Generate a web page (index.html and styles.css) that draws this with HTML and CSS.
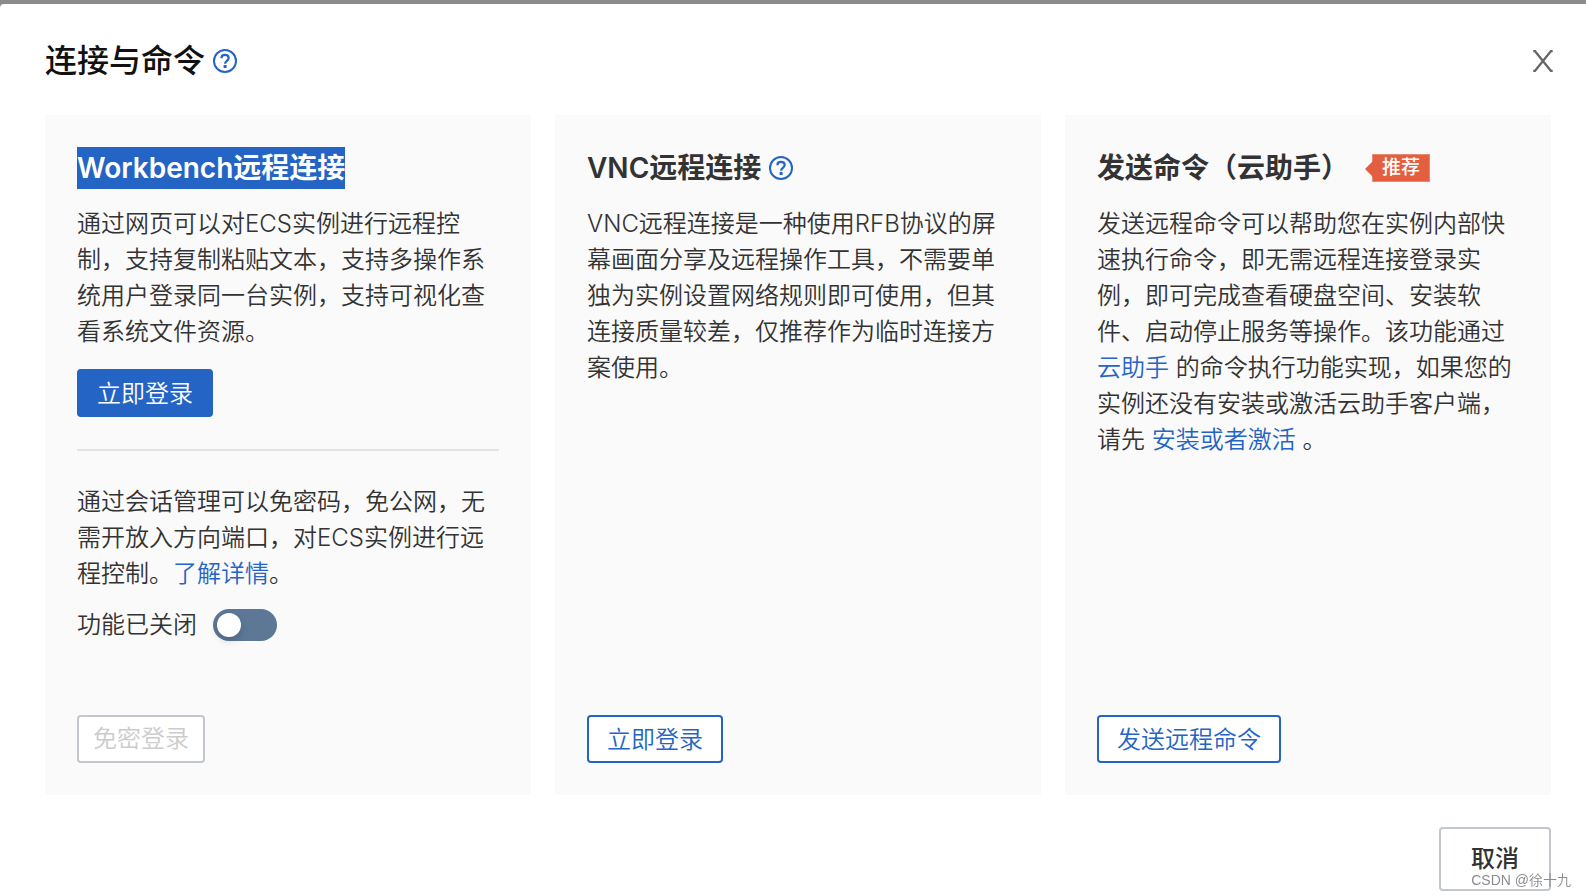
FILE: index.html
```
<!DOCTYPE html>
<html lang="zh-CN">
<head>
    <meta charset="UTF-8">
    <title>连接与命令</title>
    <link rel="stylesheet" href="styles.css">
</head>
<body>
    <div class="dialog" role="dialog" aria-labelledby="dialogTitle">
        <div class="dialog-header">
            <h1 id="dialogTitle">连接与命令</h1>
            <button type="button" class="icon-btn" aria-label="帮助">
                <svg width="24" height="24" viewBox="0 0 24 24" fill="none" stroke="currentColor">
                    <circle cx="12" cy="12" r="11" stroke-width="2"/>
                    <path d="M8.4 9.2C8.4 7 9.9 5.9 12 5.9s3.7 1.2 3.7 3.2c0 2.7-3.6 2.7-3.6 5.6" stroke-width="2.2"/>
                    <path d="M12.1 16v3" stroke-width="3"/>
                </svg>
            </button>
            <button type="button" class="icon-btn close-btn" aria-label="关闭">
                <svg width="20" height="22" viewBox="0 0 20 22" fill="none" stroke="currentColor" stroke-width="2.3">
                    <path d="M.3 1h1.6L18 21h1.7M19.7 1H18L1.9 21H.3"/>
                </svg>
            </button>
        </div>

        <div class="cards">
            <section class="card">
                <h2><span class="selected">Workbench远程连接</span></h2>
                <p>通过网页可以对ECS实例进行远程控制，支持复制粘贴文本，支持多操作系统用户登录同一台实例，支持可视化查看系统文件资源。</p>
                <button type="button" class="btn btn-primary">立即登录</button>
                <hr>
                <p>通过会话管理可以免密码，免公网，无需开放入方向端口，对ECS实例进行远程控制。<a href="#">了解详情</a>。</p>
                <div class="switch-row">
                    <label for="sessionSwitch">功能已关闭</label>
                    <input type="checkbox" role="switch" id="sessionSwitch" class="switch">
                </div>
                <div class="card-footer">
                    <button type="button" class="btn btn-disabled" disabled>免密登录</button>
                </div>
            </section>

            <section class="card">
                <h2>
                    VNC远程连接
                    <button type="button" class="icon-btn" aria-label="帮助">
                        <svg width="24" height="24" viewBox="0 0 24 24" fill="none" stroke="currentColor">
                            <circle cx="12" cy="12" r="11" stroke-width="2"/>
                            <path d="M8.4 9.2C8.4 7 9.9 5.9 12 5.9s3.7 1.2 3.7 3.2c0 2.7-3.6 2.7-3.6 5.6" stroke-width="2.2"/>
                            <path d="M12.1 16v3" stroke-width="3"/>
                        </svg>
                    </button>
                </h2>
                <p>VNC远程连接是一种使用RFB协议的屏幕画面分享及远程操作工具，不需要单独为实例设置网络规则即可使用，但其连接质量较差，仅推荐作为临时连接方案使用。</p>
                <div class="card-footer">
                    <button type="button" class="btn btn-outline">立即登录</button>
                </div>
            </section>

            <section class="card">
                <h2>发送命令（云助手）<span class="tag">推荐</span></h2>
                <p>发送远程命令可以帮助您在实例内部快速执行命令，即无需远程连接登录实例，即可完成查看硬盘空间、安装软件、启动停止服务等操作。该功能通过 <a href="#">云助手</a> 的命令执行功能实现，如果您的实例还没有安装或激活云助手客户端，请先 <a href="#">安装或者激活</a> 。</p>
                <div class="card-footer">
                    <button type="button" class="btn btn-outline">发送远程命令</button>
                </div>
            </section>
        </div>

        <div class="dialog-footer">
            <button type="button" class="btn btn-cancel">取消</button>
        </div>
    </div>
    <div class="watermark">CSDN @徐十九</div>
</body>
</html>
```
FILE: styles.css
```
* {
    box-sizing: border-box;
}

body {
    margin: 0;
    padding-top: 4px;
    background-color: #8b8b8b;
    color: #333;
    font-family: Inter, "Noto Sans CJK SC", sans-serif;
    font-size: 24px;
    font-weight: 350;
    line-height: 36px;
}

.dialog {
    display: flex;
    flex-direction: column;
    min-height: calc(100vh - 4px);
    padding: 0 35px 5px 45px;
    border-radius: 4px 0 0 0;
    background-color: #fff;
}

.dialog-header {
    display: flex;
    align-items: center;
    gap: 8px;
    padding: 33px 0 30px;
}

h1, h2, p {
    margin: 0;
}

h1 {
    color: #111;
    font-size: 32px;
    font-weight: 500;
    line-height: 48px;
}

h2 {
    display: flex;
    align-items: center;
    gap: 8px;
    margin-bottom: 17px;
    font-size: 28px;
    font-weight: 600;
    line-height: 42px;
}

a {
    color: #2464c4;
    text-decoration: none;
}

button {
    font-family: inherit;
    cursor: pointer;
}

.icon-btn {
    display: flex;
    padding: 0;
    border: none;
    background: none;
    color: #2464c4;
}

.close-btn {
    margin-left: auto;
    margin-right: -2px;
    color: #666;
}

.cards {
    display: grid;
    grid-template-columns: repeat(3, 1fr);
    gap: 24px;
    flex: 1;
}

.card {
    display: flex;
    flex-direction: column;
    align-items: flex-start;
    padding: 32px;
    background-color: #fafafa;
}

.selected {
    background-color: #2464c4;
    color: #fff;
}

hr {
    width: 100%;
    height: 2px;
    margin: 32px 0 33px;
    border: none;
    background-color: #e3e4e6;
}

.btn {
    height: 48px;
    padding: 1px 18px 0;
    border: 2px solid #2464c4;
    border-radius: 4px;
    background-color: #fff;
    color: #2464c4;
    font-size: 24px;
    font-weight: 350;
    line-height: 36px;
}

.btn-primary {
    margin-top: 19px;
    background-color: #2464c4;
    color: #fff;
}

.btn-disabled {
    padding: 0 14px;
    border-color: #c1c7cd;
    color: #ccc;
    cursor: not-allowed;
}

.btn-cancel {
    height: 64px;
    padding: 0 30px;
    border-color: #c1c7cd;
    color: #333;
    font-weight: 500;
}

.switch-row {
    display: flex;
    align-items: center;
    gap: 16px;
    margin-top: 15px;
}

.switch {
    appearance: none;
    width: 64px;
    height: 32px;
    margin: 0;
    padding: 4px;
    border-radius: 16px;
    background-color: #5c7896;
    cursor: pointer;
}

.switch::before {
    content: "";
    display: block;
    width: 24px;
    height: 24px;
    border-radius: 50%;
    background-color: #fff;
    box-shadow: 0 4px 8px rgba(0, 0, 0, 0.15);
}

.switch:checked::before {
    margin-left: auto;
}

.tag {
    position: relative;
    margin-left: 15px;
    padding: 0 9px;
    border: 1px solid #ea8a73;
    background-color: #e35f40;
    color: #fff;
    font-size: 19px;
    font-weight: 500;
    line-height: 26px;
}

/* arrow on the left side of the tag */
.tag::before {
    content: "";
    position: absolute;
    top: 6px;
    left: -8px;
    border: 8px solid transparent;
    border-left-width: 0;
    border-right-color: #e35f40;
}

.card-footer {
    margin-top: auto;
    padding-top: 32px;
}

.dialog-footer {
    display: flex;
    justify-content: flex-end;
    padding-top: 32px;
}

.watermark {
    position: fixed;
    right: 15px;
    bottom: 6px;
    color: #8c8c8c;
    font-family: "Liberation Sans", "Noto Sans CJK SC", sans-serif;
    font-size: 14px;
    line-height: 20px;
}
```
